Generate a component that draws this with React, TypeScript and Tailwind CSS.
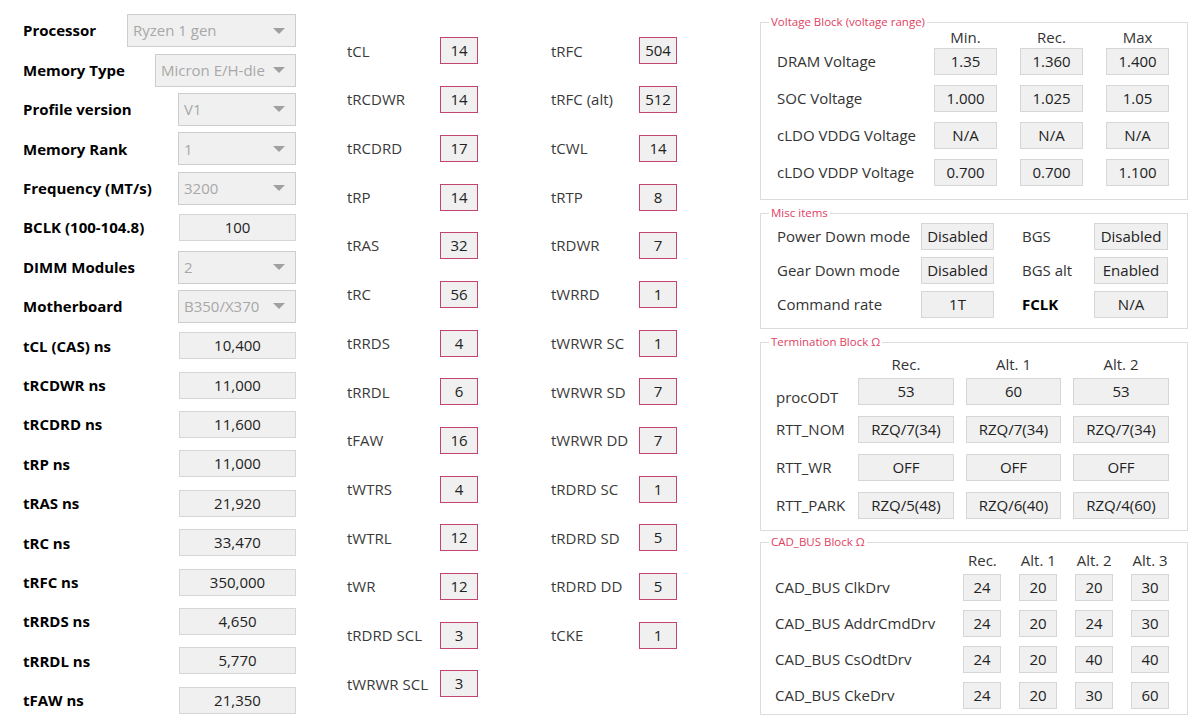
const font = { fontFamily: '"Open Sans", "Noto Sans", sans-serif' };

type LeftRow = { label: string; kind: "select" | "text"; value: string; w: string };

const leftRows: LeftRow[] = [
  { label: "Processor", kind: "select", value: "Ryzen 1 gen", w: "w-[169px]" },
  { label: "Memory Type", kind: "select", value: "Micron E/H-die", w: "w-[141px]" },
  { label: "Profile version", kind: "select", value: "V1", w: "w-[118px]" },
  { label: "Memory Rank", kind: "select", value: "1", w: "w-[118px]" },
  { label: "Frequency (MT/s)", kind: "select", value: "3200", w: "w-[118px]" },
  { label: "BCLK (100-104.8)", kind: "text", value: "100", w: "w-[117px]" },
  { label: "DIMM Modules", kind: "select", value: "2", w: "w-[118px]" },
  { label: "Motherboard", kind: "select", value: "B350/X370", w: "w-[118px]" },
  { label: "tCL (CAS) ns", kind: "text", value: "10,400", w: "w-[117px]" },
  { label: "tRCDWR ns", kind: "text", value: "11,000", w: "w-[117px]" },
  { label: "tRCDRD ns", kind: "text", value: "11,600", w: "w-[117px]" },
  { label: "tRP ns", kind: "text", value: "11,000", w: "w-[117px]" },
  { label: "tRAS ns", kind: "text", value: "21,920", w: "w-[117px]" },
  { label: "tRC ns", kind: "text", value: "33,470", w: "w-[117px]" },
  { label: "tRFC ns", kind: "text", value: "350,000", w: "w-[117px]" },
  { label: "tRRDS ns", kind: "text", value: "4,650", w: "w-[117px]" },
  { label: "tRRDL ns", kind: "text", value: "5,770", w: "w-[117px]" },
  { label: "tFAW ns", kind: "text", value: "21,350", w: "w-[117px]" },
];

const timings1: [string, string][] = [
  ["tCL", "14"], ["tRCDWR", "14"], ["tRCDRD", "17"], ["tRP", "14"], ["tRAS", "32"],
  ["tRC", "56"], ["tRRDS", "4"], ["tRRDL", "6"], ["tFAW", "16"], ["tWTRS", "4"],
  ["tWTRL", "12"], ["tWR", "12"], ["tRDRD SCL", "3"], ["tWRWR SCL", "3"],
];

const timings2: [string, string][] = [
  ["tRFC", "504"], ["tRFC (alt)", "512"], ["tCWL", "14"], ["tRTP", "8"], ["tRDWR", "7"],
  ["tWRRD", "1"], ["tWRWR SC", "1"], ["tWRWR SD", "7"], ["tWRWR DD", "7"], ["tRDRD SC", "1"],
  ["tRDRD SD", "5"], ["tRDRD DD", "5"], ["tCKE", "1"],
];

const voltages: [string, string, string, string][] = [
  ["DRAM Voltage", "1.35", "1.360", "1.400"],
  ["SOC Voltage", "1.000", "1.025", "1.05"],
  ["cLDO VDDG Voltage", "N/A", "N/A", "N/A"],
  ["cLDO VDDP Voltage", "0.700", "0.700", "1.100"],
];

const misc: [string, string, string, string, boolean][] = [
  ["Power Down mode", "Disabled", "BGS", "Disabled", false],
  ["Gear Down mode", "Disabled", "BGS alt", "Enabled", false],
  ["Command rate", "1T", "FCLK", "N/A", true],
];

const termination: [string, string, string, string][] = [
  ["procODT", "53", "60", "53"],
  ["RTT_NOM", "RZQ/7(34)", "RZQ/7(34)", "RZQ/7(34)"],
  ["RTT_WR", "OFF", "OFF", "OFF"],
  ["RTT_PARK", "RZQ/5(48)", "RZQ/6(40)", "RZQ/4(60)"],
];

const cadBus: [string, string, string, string, string][] = [
  ["CAD_BUS ClkDrv", "24", "20", "20", "30"],
  ["CAD_BUS AddrCmdDrv", "24", "20", "24", "30"],
  ["CAD_BUS CsOdtDrv", "24", "20", "40", "40"],
  ["CAD_BUS CkeDrv", "24", "20", "30", "60"],
];

function Box({ value, className = "" }: { value: string; className?: string }) {
  return (
    <div
      className={`h-[27px] shrink-0 border border-[#d6d6d6] bg-[#f0f0f0] text-center text-[15px] leading-[25px] text-[#222] ${className}`}
    >
      {value}
    </div>
  );
}

function RedBox({ value }: { value: string }) {
  return (
    <div className="h-[27px] w-[38px] shrink-0 border border-[#c4456c] bg-[#f0f0f0] text-center text-[15px] leading-[25px] text-[#222]">
      {value}
    </div>
  );
}

function Select({ value, w }: { value: string; w: string }) {
  return (
    <div
      className={`flex h-[33px] ${w} items-center justify-between overflow-hidden border border-[#cdcdcd] bg-[#f0f0f0] pl-[5px] pr-[10px] text-[15px] text-[#a8a8a8]`}
    >
      <span className="whitespace-nowrap">{value}</span>
      <svg width="12" height="6" viewBox="0 0 12 6" className="shrink-0">
        <polygon points="0,0 12,0 6,6" fill="#a0a0a0" />
      </svg>
    </div>
  );
}

function Group({ title, className, children }: { title: string; className: string; children: React.ReactNode }) {
  return (
    <div className={`relative border border-[#dcdcdc] ${className}`}>
      <span className="absolute -top-[8px] left-[8px] bg-white px-[2px] text-[11.5px] leading-[14px] text-[#e2405f]">
        {title}
      </span>
      {children}
    </div>
  );
}

export default function App() {
  return (
    <div className="flex h-[720px] w-[1190px] items-start overflow-hidden bg-white" style={font}>
      {/* left: profile + ns values */}
      <div className="ml-[23px] flex w-[273px] flex-col pt-[11px]">
        {leftRows.map((r) => (
          <div key={r.label} className="flex h-[39.4px] items-center justify-between">
            <span className="whitespace-nowrap text-[15px] font-bold text-black">{r.label}</span>
            {r.kind === "select" ? <Select value={r.value} w={r.w} /> : <Box value={r.value} className={r.w} />}
          </div>
        ))}
      </div>

      {/* middle: primary / secondary timings */}
      <div className="ml-[51px] flex pt-[26.6px]">
        <div className="flex w-[131px] flex-col">
          {timings1.map(([l, v]) => (
            <div key={l} className="flex h-[48.7px] items-center justify-between">
              <span className="whitespace-nowrap text-[15px] text-[#3a3a3a]">{l}</span>
              <RedBox value={v} />
            </div>
          ))}
        </div>
        <div className="ml-[73px] flex w-[126px] flex-col">
          {timings2.map(([l, v]) => (
            <div key={l} className="flex h-[48.7px] items-center justify-between">
              <span className="whitespace-nowrap text-[15px] text-[#3a3a3a]">{l}</span>
              <RedBox value={v} />
            </div>
          ))}
        </div>
      </div>

      {/* right: blocks */}
      <div className="ml-[83px] flex w-[428px] flex-col pt-[22px] text-[15px] text-[#333]">
        <Group title="Voltage Block (voltage range)" className="pb-[13px] pl-[16px] pr-[18px] pt-[6px]">
          <div className="flex h-[16px] items-center leading-[16px]">
            <span className="w-[157px]" />
            <span className="w-[63px] text-center">Min.</span>
            <span className="ml-[23px] w-[63px] text-center">Rec.</span>
            <span className="ml-[23px] w-[63px] text-center">Max</span>
          </div>
          <div className="mt-[3px] flex flex-col gap-[10px]">
            {voltages.map(([l, a, b, c]) => (
              <div key={l} className="flex items-center">
                <span className="w-[157px] whitespace-nowrap">{l}</span>
                <Box value={a} className="w-[63px]" />
                <Box value={b} className="ml-[23px] w-[63px]" />
                <Box value={c} className="ml-[23px] w-[63px]" />
              </div>
            ))}
          </div>
        </Group>

        <Group title="Misc items" className="mt-[13px] pb-[10px] pl-[16px] pr-[19px] pt-[9px]">
          <div className="flex flex-col gap-[7px]">
            {misc.map(([l1, v1, l2, v2, bold]) => (
              <div key={l1} className="flex items-center">
                <span className="w-[144px] whitespace-nowrap">{l1}</span>
                <Box value={v1} className="w-[73px]" />
                <span className={`ml-[28px] w-[72px] whitespace-nowrap ${bold ? "font-bold text-black" : ""}`}>{l2}</span>
                <Box value={v2} className="w-[74px]" />
              </div>
            ))}
          </div>
        </Group>

        <Group title="Termination Block Ω" className="mt-[13px] pb-[11px] pl-[15px] pr-[18px] pt-[13px]">
          <div className="flex h-[16px] items-center leading-[16px]">
            <span className="w-[82px]" />
            <span className="w-[96px] text-center">Rec.</span>
            <span className="ml-[12px] w-[95px] text-center">Alt. 1</span>
            <span className="ml-[12px] w-[96px] text-center">Alt. 2</span>
          </div>
          <div className="mt-[6px] flex flex-col gap-[11px]">
            {termination.map(([l, a, b, c], i) => (
              <div key={l} className="flex items-center">
                <span className={`w-[82px] whitespace-nowrap ${i === 0 ? "translate-y-[6px]" : ""}`}>{l}</span>
                <Box value={a} className="w-[96px]" />
                <Box value={b} className="ml-[12px] w-[95px]" />
                <Box value={c} className="ml-[12px] w-[96px]" />
              </div>
            ))}
          </div>
        </Group>

        <Group title="CAD_BUS Block Ω" className="mt-[11px] pb-[5px] pl-[14px] pr-[18px] pt-[9px]">
          <div className="flex h-[16px] items-center leading-[16px]">
            <span className="w-[189px]" />
            <span className="w-[38px] text-center">Rec.</span>
            <span className="ml-[18px] w-[38px] whitespace-nowrap text-center">Alt. 1</span>
            <span className="ml-[18px] w-[38px] whitespace-nowrap text-center">Alt. 2</span>
            <span className="ml-[18px] w-[38px] whitespace-nowrap text-center">Alt. 3</span>
          </div>
          <div className="mt-[6px] flex flex-col gap-[9px]">
            {cadBus.map(([l, a, b, c, d]) => (
              <div key={l} className="flex items-center">
                <span className="w-[189px] whitespace-nowrap">{l}</span>
                <Box value={a} className="w-[38px]" />
                <Box value={b} className="ml-[18px] w-[38px]" />
                <Box value={c} className="ml-[18px] w-[38px]" />
                <Box value={d} className="ml-[18px] w-[38px]" />
              </div>
            ))}
          </div>
        </Group>
      </div>
    </div>
  );
}
